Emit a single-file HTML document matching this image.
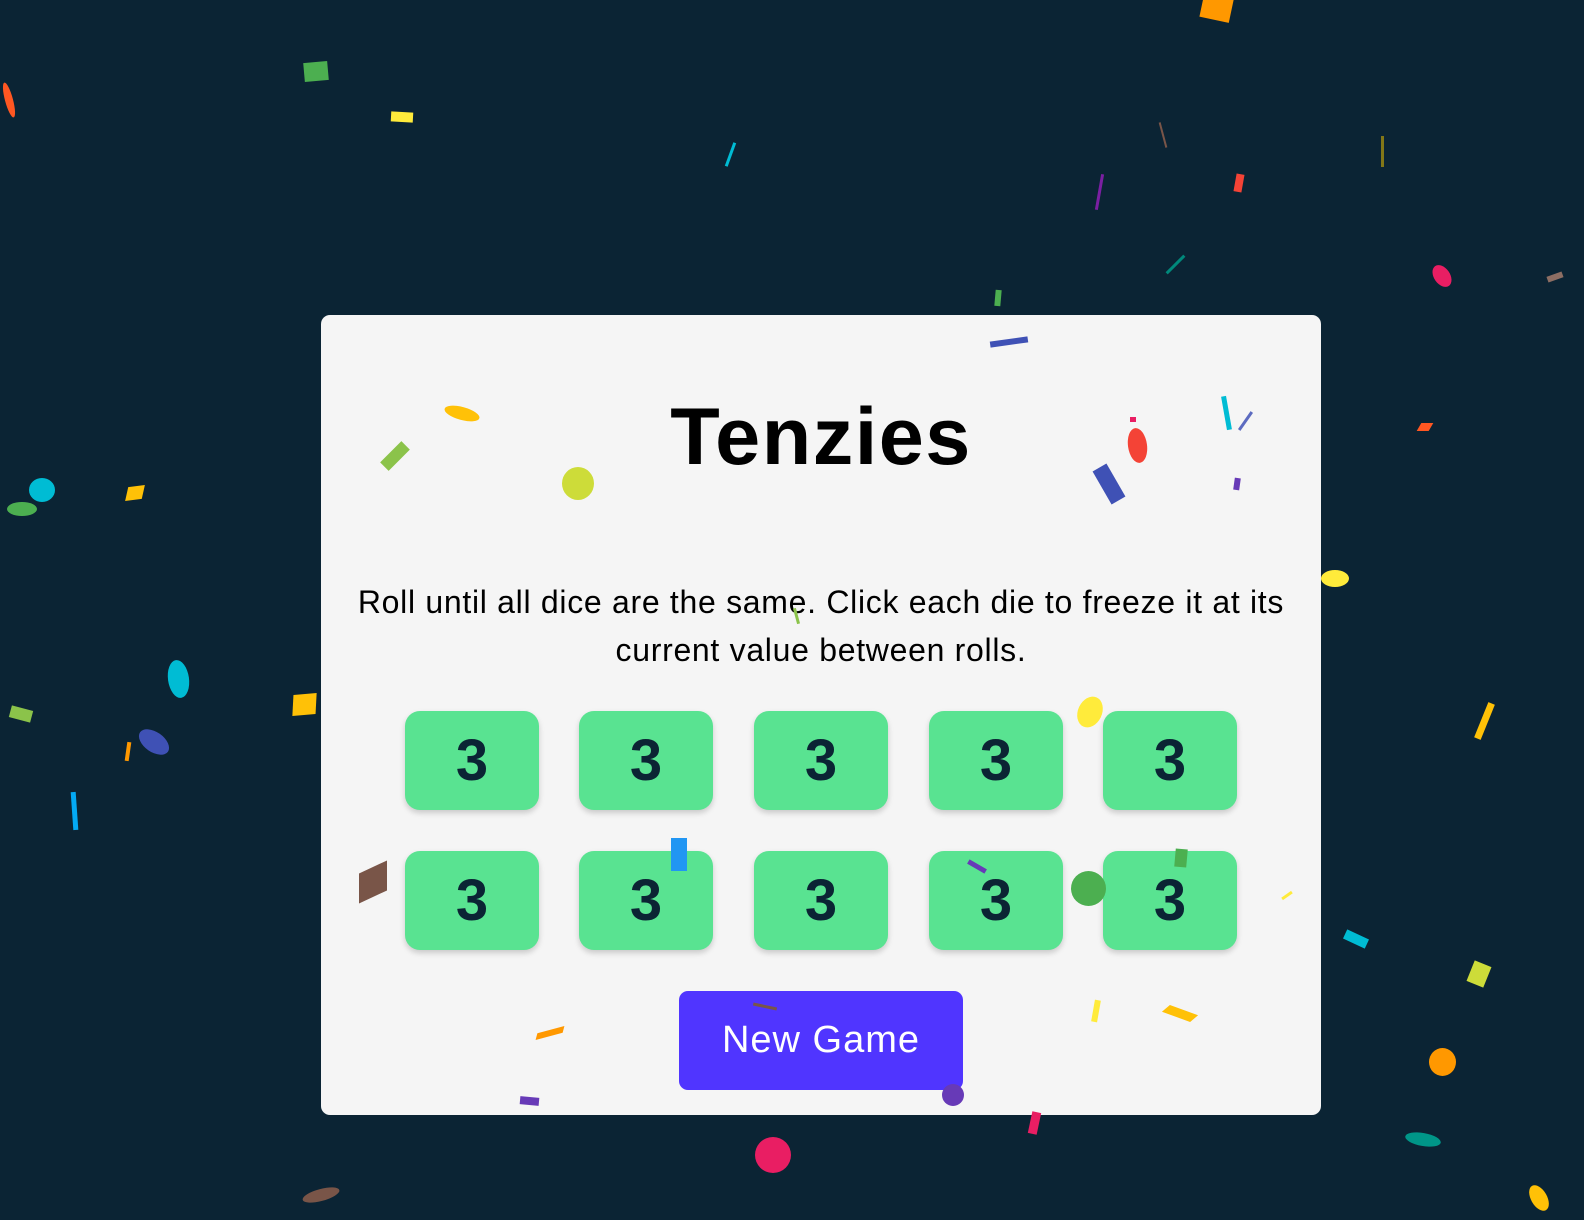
<!DOCTYPE html>
<html><head><meta charset="utf-8"><style>
html,body{margin:0;padding:0}
body{width:1584px;height:1220px;background:#0b2434;position:relative;overflow:hidden;font-family:"Liberation Sans",sans-serif}
.panel{position:absolute;left:321px;top:315px;width:1000px;height:800px;background:#f5f5f5;border-radius:9px}
h1{position:absolute;left:321px;width:1000px;top:392px;margin:0;text-align:center;font-size:81px;font-weight:bold;color:#000;letter-spacing:1.5px;line-height:90px}
p{position:absolute;left:311px;width:1020px;top:578px;margin:0;text-align:center;font-size:32px;letter-spacing:0.7px;line-height:48px;color:#000}
.die{position:absolute;width:134px;height:99px;background:#59e391;border-radius:15px;box-shadow:0 3px 6px rgba(0,0,0,.18);color:#0b2434;font-size:58px;font-weight:bold;text-align:center;line-height:99px}
.btn{position:absolute;left:679px;top:991px;width:284px;height:99px;background:#5035ff;border-radius:9px;color:#fff;font-size:38px;letter-spacing:1px;text-align:center;line-height:99px}
.c{position:absolute}
</style></head><body>
<div class="panel"></div>
<h1>Tenzies</h1>
<p>Roll until all dice are the same. Click each die to freeze it at its<br>current value between rolls.</p>
<div class="die" style="left:405px;top:711px">3</div>
<div class="die" style="left:579px;top:711px">3</div>
<div class="die" style="left:754px;top:711px">3</div>
<div class="die" style="left:929px;top:711px">3</div>
<div class="die" style="left:1103px;top:711px">3</div>
<div class="die" style="left:405px;top:851px">3</div>
<div class="die" style="left:579px;top:851px">3</div>
<div class="die" style="left:754px;top:851px">3</div>
<div class="die" style="left:929px;top:851px">3</div>
<div class="die" style="left:1103px;top:851px">3</div>
<div class="btn">New Game</div>

<div class="c" style="left:1202px;top:-8px;width:30px;height:28px;background:#ff9800;transform:rotate(12deg)"></div>
<div class="c" style="left:304px;top:62px;width:24px;height:19px;background:#4caf50;transform:rotate(-5deg)"></div>
<div class="c" style="left:5px;top:82px;width:8px;height:36px;background:#ff5722;border-radius:50%;transform:rotate(-15deg)"></div>
<div class="c" style="left:391px;top:112px;width:22px;height:10px;background:#ffeb3b;transform:rotate(3deg)"></div>
<div class="c" style="left:729px;top:142px;width:3px;height:25px;background:#00bcd4;transform:rotate(20deg)"></div>
<div class="c" style="left:1162px;top:122px;width:2px;height:26px;background:#795548;transform:rotate(-15deg)"></div>
<div class="c" style="left:1381px;top:136px;width:3px;height:31px;background:#827717"></div>
<div class="c" style="left:1235px;top:174px;width:8px;height:18px;background:#f44336;transform:rotate(10deg)"></div>
<div class="c" style="left:1098px;top:174px;width:3px;height:36px;background:#7b1fa2;transform:rotate(10deg)"></div>
<div class="c" style="left:1174px;top:252px;width:3px;height:25px;background:#00897b;transform:rotate(45deg)"></div>
<div class="c" style="left:1434px;top:264px;width:16px;height:24px;background:#e91e63;border-radius:50%;transform:rotate(-35deg)"></div>
<div class="c" style="left:1547px;top:274px;width:16px;height:6px;background:#8d6e63;transform:rotate(-20deg)"></div>
<div class="c" style="left:995px;top:290px;width:6px;height:16px;background:#4caf50;transform:rotate(5deg)"></div>
<div class="c" style="left:990px;top:339px;width:38px;height:6px;background:#3f51b5;transform:rotate(-8deg)"></div>
<div class="c" style="left:444px;top:407px;width:36px;height:13px;background:#ffc107;border-radius:50%;transform:rotate(15deg)"></div>
<div class="c" style="left:380px;top:450px;width:30px;height:12px;background:#8bc34a;transform:rotate(-45deg)"></div>
<div class="c" style="left:562px;top:467px;width:32px;height:33px;background:#cddc39;border-radius:50%"></div>
<div class="c" style="left:1130px;top:417px;width:6px;height:5px;background:#e91e63"></div>
<div class="c" style="left:1128px;top:428px;width:19px;height:35px;background:#f44336;border-radius:50%;transform:rotate(-8deg)"></div>
<div class="c" style="left:1101px;top:465px;width:16px;height:38px;background:#3f51b5;transform:rotate(-30deg)"></div>
<div class="c" style="left:1224px;top:396px;width:5px;height:34px;background:#00bcd4;transform:rotate(-10deg)"></div>
<div class="c" style="left:1244px;top:410px;width:3px;height:22px;background:#5c6bc0;transform:rotate(35deg)"></div>
<div class="c" style="left:1234px;top:478px;width:6px;height:12px;background:#673ab7;transform:rotate(8deg)"></div>
<div class="c" style="left:1419px;top:423px;width:12px;height:8px;background:#ff5722;transform:skewX(-30deg)"></div>
<div class="c" style="left:29px;top:478px;width:26px;height:24px;background:#00bcd4;border-radius:50%"></div>
<div class="c" style="left:7px;top:502px;width:30px;height:14px;background:#4caf50;border-radius:50%"></div>
<div class="c" style="left:127px;top:486px;width:16px;height:14px;background:#ffc107;transform:skewX(-20deg) rotate(-8deg)"></div>
<div class="c" style="left:1321px;top:570px;width:28px;height:17px;background:#ffeb3b;border-radius:50%"></div>
<div class="c" style="left:795px;top:608px;width:3px;height:16px;background:#8bc34a;transform:rotate(-15deg)"></div>
<div class="c" style="left:168px;top:660px;width:21px;height:38px;background:#00bcd4;border-radius:50%;transform:rotate(-8deg)"></div>
<div class="c" style="left:293px;top:694px;width:23px;height:21px;background:#ffc107;transform:skewX(-8deg) rotate(-5deg)"></div>
<div class="c" style="left:1078px;top:696px;width:24px;height:32px;background:#ffeb3b;border-radius:50%;transform:rotate(25deg)"></div>
<div class="c" style="left:1481px;top:702px;width:7px;height:38px;background:#ffc107;transform:rotate(22deg)"></div>
<div class="c" style="left:10px;top:708px;width:22px;height:12px;background:#8bc34a;transform:rotate(15deg)"></div>
<div class="c" style="left:137px;top:732px;width:34px;height:20px;background:#3f51b5;border-radius:50%;transform:rotate(35deg)"></div>
<div class="c" style="left:126px;top:742px;width:4px;height:19px;background:#ff9800;transform:rotate(8deg)"></div>
<div class="c" style="left:72px;top:792px;width:5px;height:38px;background:#03a9f4;transform:rotate(-4deg)"></div>
<div class="c" style="left:671px;top:838px;width:16px;height:33px;background:#2196f3"></div>
<div class="c" style="left:967px;top:864px;width:20px;height:5px;background:#673ab7;transform:rotate(30deg)"></div>
<div class="c" style="left:1071px;top:871px;width:35px;height:35px;background:#4caf50;border-radius:50%"></div>
<div class="c" style="left:1175px;top:849px;width:12px;height:18px;background:#4caf50;transform:rotate(5deg)"></div>
<div class="c" style="left:359px;top:867px;width:28px;height:30px;background:#795548;transform:skewY(-25deg)"></div>
<div class="c" style="left:1281px;top:894px;width:12px;height:3px;background:#ffeb3b;transform:rotate(-35deg)"></div>
<div class="c" style="left:1344px;top:934px;width:24px;height:10px;background:#00bcd4;transform:rotate(25deg)"></div>
<div class="c" style="left:1470px;top:963px;width:18px;height:22px;background:#cddc39;transform:rotate(22deg)"></div>
<div class="c" style="left:1093px;top:1000px;width:6px;height:22px;background:#ffeb3b;transform:rotate(10deg)"></div>
<div class="c" style="left:1165px;top:1009px;width:30px;height:9px;background:#ffc107;transform:rotate(20deg) skewX(-30deg)"></div>
<div class="c" style="left:536px;top:1030px;width:28px;height:6px;background:#ff9800;transform:rotate(-15deg) skewX(-30deg)"></div>
<div class="c" style="left:753px;top:1005px;width:24px;height:3px;background:#795548;transform:rotate(12deg)"></div>
<div class="c" style="left:1429px;top:1048px;width:27px;height:28px;background:#ff9800;border-radius:50%"></div>
<div class="c" style="left:942px;top:1084px;width:22px;height:22px;background:#673ab7;border-radius:50%"></div>
<div class="c" style="left:520px;top:1097px;width:19px;height:8px;background:#673ab7;transform:rotate(5deg)"></div>
<div class="c" style="left:1030px;top:1112px;width:9px;height:22px;background:#e91e63;transform:rotate(12deg)"></div>
<div class="c" style="left:755px;top:1137px;width:36px;height:36px;background:#e91e63;border-radius:50%"></div>
<div class="c" style="left:1405px;top:1133px;width:36px;height:13px;background:#009688;border-radius:50%;transform:rotate(10deg)"></div>
<div class="c" style="left:302px;top:1189px;width:38px;height:12px;background:#795548;border-radius:50%;transform:rotate(-15deg)"></div>
<div class="c" style="left:1531px;top:1184px;width:16px;height:28px;background:#ffc107;border-radius:50%;transform:rotate(-30deg)"></div>
</body></html>
